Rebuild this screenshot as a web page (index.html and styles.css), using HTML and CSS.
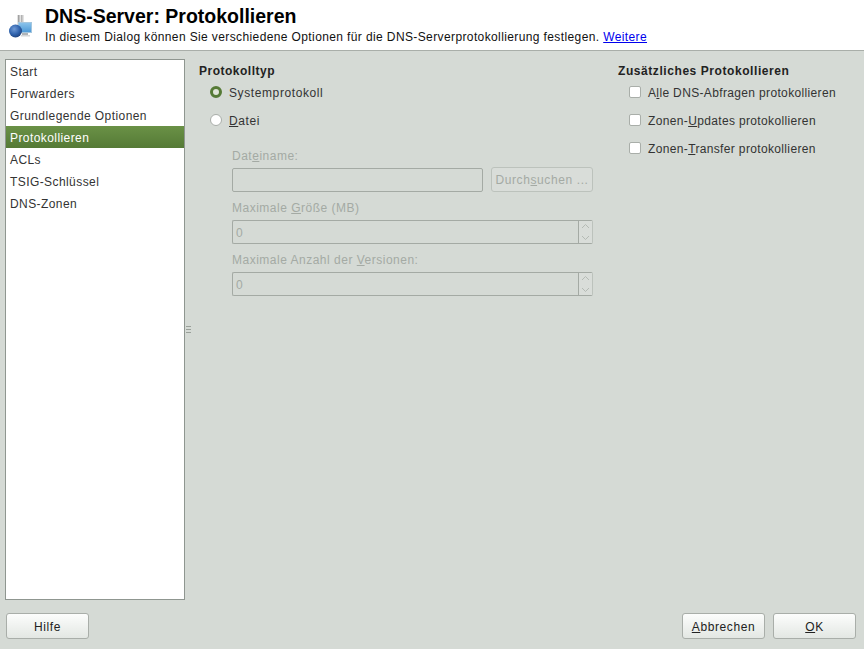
FILE: index.html
```html
<!DOCTYPE html>
<html lang="de">
<head>
  <meta charset="UTF-8">
  <title>DNS-Server: Protokollieren</title>
  <link rel="stylesheet" href="styles.css">
</head>
<body>
  <div class="dialog">
    <div class="header">
      <svg class="header-icon" width="26" height="26" viewBox="0 0 26 26">
        <defs>
          <linearGradient id="screen" x1="0" y1="0" x2="0" y2="1">
            <stop offset="0" stop-color="#8cc4ec"/>
            <stop offset="1" stop-color="#4b98d6"/>
          </linearGradient>
          <radialGradient id="globe" cx="0.4" cy="0.35" r="0.7">
            <stop offset="0" stop-color="#6f9ad6"/>
            <stop offset="0.6" stop-color="#2f62ac"/>
            <stop offset="1" stop-color="#1d3f78"/>
          </radialGradient>
        </defs>
        <rect x="9" y="0" width="7" height="12" fill="#e2e2e2"/>
        <rect x="10" y="0" width="1.5" height="12" fill="#a2a2a2"/>
        <rect x="13" y="0" width="1.5" height="12" fill="#b2b2b2"/>
        <rect x="10.5" y="7.5" width="13" height="10" fill="url(#screen)" stroke="#a4c6de"/>
        <rect x="14" y="18" width="6" height="2" fill="#b0b4b8"/>
        <rect x="13" y="20" width="9" height="1.5" fill="#d4d6d8"/>
        <circle cx="7.5" cy="16" r="6.5" fill="url(#globe)"/>
      </svg>
      <div class="header-text">
        <h1>DNS-Server: Protokollieren</h1>
        <p>In diesem Dialog können Sie verschiedene Optionen für die DNS-Serverprotokollierung festlegen. <a href="#">Weitere</a></p>
      </div>
    </div>

    <div class="main">
      <ul class="nav">
        <li>Start</li>
        <li>Forwarders</li>
        <li>Grundlegende Optionen</li>
        <li class="active">Protokollieren</li>
        <li>ACLs</li>
        <li>TSIG-Schlüssel</li>
        <li>DNS-Zonen</li>
      </ul>
      <div class="splitter"><span></span><span></span><span></span></div>

      <div class="content">
        <div class="col-left">
          <h2>Protokolltyp</h2>
          <div class="opts">
            <label class="opt"><span class="radio checked"></span>Systemprotokoll</label>
            <label class="opt"><span class="radio"></span><span><u>D</u>atei</span></label>
          </div>
          <div class="file-group">
            <div class="field-label">Dat<u>e</u>iname:</div>
            <div class="file-row">
              <div class="input"></div>
              <div class="browse">Durch<u>s</u>uchen ...</div>
            </div>
            <div class="field-label">Maximale <u>G</u>röße (MB)</div>
            <div class="spin">
              <div class="spin-value">0</div>
              <div class="spin-btns">
                <svg width="13" height="11" viewBox="0 0 13 11"><path d="M3 7l3.5-3.5L10 7" fill="none" stroke="#b4bab4"/></svg>
                <svg width="13" height="11" viewBox="0 0 13 11"><path d="M3 4l3.5 3.5L10 4" fill="none" stroke="#b4bab4"/></svg>
              </div>
            </div>
            <div class="field-label">Maximale Anzahl der <u>V</u>ersionen:</div>
            <div class="spin">
              <div class="spin-value">0</div>
              <div class="spin-btns">
                <svg width="13" height="11" viewBox="0 0 13 11"><path d="M3 7l3.5-3.5L10 7" fill="none" stroke="#b4bab4"/></svg>
                <svg width="13" height="11" viewBox="0 0 13 11"><path d="M3 4l3.5 3.5L10 4" fill="none" stroke="#b4bab4"/></svg>
              </div>
            </div>
          </div>
        </div>
        <div class="col-right">
          <h2>Zusätzliches Protokollieren</h2>
          <div class="opts">
            <label class="opt"><span class="check"></span><span>A<u>l</u>le DNS-Abfragen protokollieren</span></label>
            <label class="opt"><span class="check"></span><span>Zonen-<u>U</u>pdates protokollieren</span></label>
            <label class="opt"><span class="check"></span><span>Zonen-<u>T</u>ransfer protokollieren</span></label>
          </div>
        </div>
      </div>
    </div>

    <div class="footer">
      <div class="btn">Hilfe</div>
      <div class="footer-right">
        <div class="btn"><u>A</u>bbrechen</div>
        <div class="btn"><u>O</u>K</div>
      </div>
    </div>
  </div>
</body>
</html>
```

FILE: styles.css
```css
html, body {
  margin: 0;
  height: 100%;
}
body {
  background: #d5dad5;
  color: #222;
  font: 12px "Liberation Sans", Arial, sans-serif;
  letter-spacing: 0.6px;
  overflow: hidden;
}
.dialog {
  width: 864px;
  height: 649px;
  display: flex;
  flex-direction: column;
}
.header {
  height: 51px;
  box-sizing: border-box;
  background: #fff;
  border-bottom: 1px solid #a9aea9;
  display: flex;
  padding: 4px 0 0 8px;
}
.header-icon {
  margin: 11px 11px 0 0;
}
.header-text h1 {
  margin: 0;
  color: #000;
  font-size: 19.5px;
  line-height: 24px;
  font-weight: bold;
  letter-spacing: 0;
}
.header-text p {
  margin: 1px 0 0;
  color: #111;
  line-height: 16px;
  letter-spacing: 0.385px;
}
.header-text a {
  color: #0000ee;
}

.main {
  height: 541px;
  padding: 8px 0 0 5px;
  display: flex;
}
.nav {
  width: 180px;
  height: 541px;
  box-sizing: border-box;
  margin: 0;
  padding: 0;
  list-style: none;
  background: #fff;
  border: 1px solid #8f9690;
}
.nav li {
  height: 22px;
  line-height: 24px;
  padding-left: 4px;
  color: #333;
  letter-spacing: 0.42px;
}
.nav li.active {
  color: #fff;
  background: linear-gradient(#6a9146, #557a36);
}
.splitter {
  width: 14px;
  display: flex;
  flex-direction: column;
  gap: 1px;
  padding: 267px 0 0 1px;
  box-sizing: border-box;
}
.splitter span {
  width: 5px;
  height: 1px;
  margin-bottom: 1px;
  background: #9aa09a;
}

.content {
  flex: 1;
  display: flex;
}
.col-left {
  width: 419px;
  padding-top: 4px;
}
.col-right {
  flex: 1;
  padding-top: 4px;
}
h2 {
  margin: 0;
  color: #222;
  font-size: 12px;
  line-height: 16px;
  font-weight: bold;
  letter-spacing: 0.5px;
}
.col-right h2 {
  letter-spacing: 0.57px;
}
.opts {
  padding: 5px 0 0 11px;
}
.col-right .opt {
  letter-spacing: 0.35px;
}
.opt {
  height: 28px;
  display: flex;
  align-items: flex-start;
  line-height: 18px;
  color: #333;
}
.radio, .check {
  width: 10px;
  height: 10px;
  flex: none;
  margin: 2px 7px 0 0;
  border: 1px solid #a9aea9;
  background: #fff;
}
.radio {
  border-radius: 50%;
}
.radio.checked {
  background: #dfe5d8;
  border: 3px solid #557a36;
  width: 6px;
  height: 6px;
}
.check {
  border-radius: 2px;
}

.file-group {
  padding: 0 0 0 33px;
  width: 361px;
  color: #a4aaa4;
  margin-top: 7px;
  letter-spacing: 0.5px;
}
.field-label {
  height: 16px;
  line-height: 18px;
  margin-bottom: 5px;
}
.file-row {
  display: flex;
  justify-content: space-between;
  align-items: flex-end;
  height: 25px;
  margin: -1px 0 7px;
}
.input {
  width: 251px;
  height: 24px;
  box-sizing: border-box;
  border: 1px solid #a4aaa4;
  border-radius: 2px;
}
.browse {
  width: 102px;
  height: 25px;
  box-sizing: border-box;
  border: 1px solid #bcc2bc;
  border-radius: 3px;
  background: #d9ddd9;
  text-align: center;
  line-height: 25px;
  white-space: nowrap;
  letter-spacing: 0.6px;
}
.spin {
  height: 24px;
  box-sizing: border-box;
  display: flex;
  border: 1px solid #a4aaa4;
  border-right-color: #bcc2bc;
  border-radius: 2px;
  margin-bottom: 7px;
}
.spin-value {
  flex: 1;
  line-height: 25px;
  padding-left: 3px;
}
.spin-btns {
  width: 13px;
  border-left: 1px solid #a4aaa4;
  background: #d9ddd9;
  display: flex;
  flex-direction: column;
}
.spin-btns svg {
  display: block;
  flex: none;
}

.footer {
  flex: 1;
  display: flex;
  justify-content: space-between;
  padding: 13px 8px 0 6px;
}
.footer-right {
  display: flex;
  gap: 8px;
}
.btn {
  width: 83px;
  height: 26px;
  box-sizing: border-box;
  border: 1px solid #a9aea9;
  border-radius: 3px;
  background: linear-gradient(#fcfdfc, #e3e7e3);
  text-align: center;
  line-height: 26px;
  color: #222;
}
```
